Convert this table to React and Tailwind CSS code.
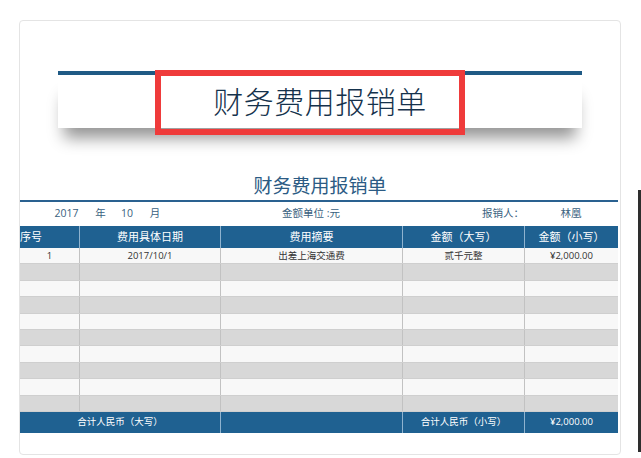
import React from "react";

const FONT = { fontFamily: '"Open Sans", "Noto Sans CJK SC", sans-serif' };
const COLS = "grid grid-cols-[59px_141px_182px_122px_94px]";

function BodyRow({ i, cells }) {
  const bg = i % 2 === 0 ? "bg-[#f8f8f8]" : "bg-[#d8d8d8]";
  return (
    <div className={`${COLS} h-[16.4px] ${bg} border-b border-[#cfcfcf] text-[9.5px] text-[#333]`}>
      {[0, 1, 2, 3, 4].map((c) => (
        <div
          key={c}
          className={`flex items-center justify-center ${c > 0 ? "border-l border-[#c2c2c2]" : ""}`}
        >
          {cells ? cells[c] : ""}
        </div>
      ))}
    </div>
  );
}

export default function App() {
  const rows = Array.from({ length: 10 }, (_, i) => i);
  return (
    <div className="w-[641px] h-[458px] bg-white flex overflow-hidden" style={FONT}>
      <div className="w-[638px] pl-[19px] pt-[20px]">
        <div className="w-[602px] h-[435px] border border-[#e4e4e4] rounded-[4px] bg-white">
          <div className="pt-[50px] px-[38px]">
            <div className="h-[4px] bg-[#1f5a85]" />
            <div className="relative h-[53px] bg-white flex items-center justify-center shadow-[0_16px_16px_-6px_rgba(0,0,0,0.42)]">
              <span className="text-[30px] leading-none font-light text-[#15324c] tracking-[0.5px]">财务费用报销单</span>
              <div className="absolute left-[97px] top-[-5px] w-[310px] h-[65px] border-[6px] border-[#ef3b3b]" />
            </div>
          </div>
          <div className="h-[72px] flex items-end justify-center pb-[2px]">
            <span className="text-[19px] leading-[24px] text-[#2c5b84]">财务费用报销单</span>
          </div>
          <div className="h-[2px] w-[598px] bg-[#2a6190]" />
          <div className="h-[24px] flex items-center text-[10.5px] text-[#3a5f7e]">
            <span className="ml-[20px] w-[53px] text-center">2017</span>
            <span className="w-[15px] text-center">年</span>
            <span className="w-[38px] text-center">10</span>
            <span className="w-[18px] text-center">月</span>
            <span className="ml-[56px] w-[182px] text-center">金额单位 :元</span>
            <span className="w-[122px] text-right">报销人：</span>
            <span className="w-[94px] text-center">林凰</span>
          </div>
          <div className="w-[598px]">
            <div className={`${COLS} h-[22px] bg-[#1f6191] text-white text-[11px]`}>
              <div className="flex items-center">序号</div>
              <div className="flex items-center justify-center border-l border-[#8fb3cf]">费用具体日期</div>
              <div className="flex items-center justify-center border-l border-[#8fb3cf]">费用摘要</div>
              <div className="flex items-center justify-center border-l border-[#8fb3cf]">金额（大写）</div>
              <div className="flex items-center justify-center border-l border-[#8fb3cf]">金额（小写）</div>
            </div>
            {rows.map((i) => (
              <BodyRow
                key={i}
                i={i}
                cells={i === 0 ? ["1", "2017/10/1", "出差上海交通费", "贰千元整", "¥2,000.00"] : null}
              />
            ))}
            <div className="grid grid-cols-[200px_182px_122px_94px] h-[21px] bg-[#1f6191] text-white text-[9.5px]">
              <div className="flex items-center justify-center">合计人民币（大写）</div>
              <div className="border-l border-[#8fb3cf]" />
              <div className="flex items-center justify-center border-l border-[#8fb3cf]">合计人民币（小写）</div>
              <div className="flex items-center justify-center border-l border-[#8fb3cf]">¥2,000.00</div>
            </div>
          </div>
        </div>
      </div>
      <div className="w-[3px] mt-[190px] h-[262px] bg-[#2e2e2e]" />
    </div>
  );
}
